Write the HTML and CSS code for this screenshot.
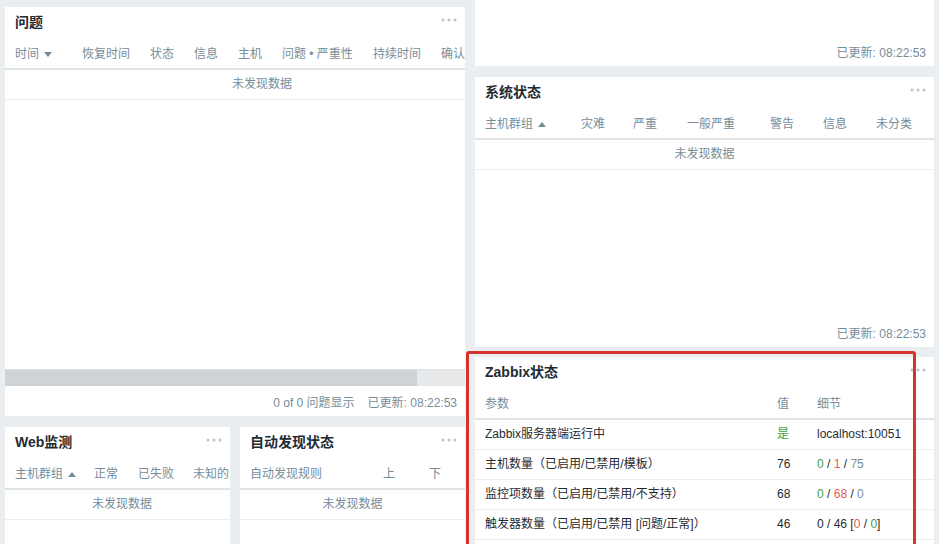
FILE: index.html
```html
<!DOCTYPE html>
<html lang="zh-CN">
<head>
<meta charset="utf-8">
<title>Zabbix 仪表板</title>
<link rel="stylesheet" href="styles.css">
</head>
<body>
<div class="dash">
  <div class="col col-left">
    <section class="widget w-problems">
      <div class="w-head"><h4>问题</h4><span class="dots"><svg width="16" height="4" viewBox="0 0 16 4"><circle cx="2" cy="2" r="1.5"/><circle cx="8" cy="2" r="1.5"/><circle cx="14" cy="2" r="1.5"/></svg></span></div>
      <div class="w-body">
        <div class="scrollarea">
          <div class="tr th t-prob">
            <span>时间<i class="arr down"></i></span><span>恢复时间</span><span>状态</span><span>信息</span><span>主机</span><span>问题 • 严重性</span><span>持续时间</span><span>确认</span>
          </div>
          <div class="tr empty t-prob-w"><span>未发现数据</span></div>
        </div>
        <div class="hscroll"><div class="thumb"></div></div>
      </div>
      <div class="w-foot"><span class="count">0 of 0 问题显示</span><span>已更新: 08:22:53</span></div>
    </section>
    <div class="row2">
      <section class="widget w-small">
        <div class="w-head"><h4>Web监测</h4><span class="dots"><svg width="16" height="4" viewBox="0 0 16 4"><circle cx="2" cy="2" r="1.5"/><circle cx="8" cy="2" r="1.5"/><circle cx="14" cy="2" r="1.5"/></svg></span></div>
        <div class="tr th t-web">
          <span>主机群组<i class="arr up"></i></span><span>正常</span><span>已失败</span><span>未知的</span>
        </div>
        <div class="tr empty t-web-w"><span>未发现数据</span></div>
      </section>
      <section class="widget w-small">
        <div class="w-head"><h4>自动发现状态</h4><span class="dots"><svg width="16" height="4" viewBox="0 0 16 4"><circle cx="2" cy="2" r="1.5"/><circle cx="8" cy="2" r="1.5"/><circle cx="14" cy="2" r="1.5"/></svg></span></div>
        <div class="tr th t-disc">
          <span>自动发现规则</span><span>上</span><span>下</span>
        </div>
        <div class="tr empty"><span>未发现数据</span></div>
      </section>
    </div>
  </div>

  <div class="col col-right">
    <section class="widget w-top">
      <div class="w-fill"></div>
      <div class="w-foot"><span>已更新: 08:22:53</span></div>
    </section>
    <section class="widget w-sys">
      <div class="w-head"><h4>系统状态</h4><span class="dots"><svg width="16" height="4" viewBox="0 0 16 4"><circle cx="2" cy="2" r="1.5"/><circle cx="8" cy="2" r="1.5"/><circle cx="14" cy="2" r="1.5"/></svg></span></div>
      <div class="tr th t-sys">
        <span>主机群组<i class="arr up"></i></span><span>灾难</span><span>严重</span><span>一般严重</span><span>警告</span><span>信息</span><span>未分类</span>
      </div>
      <div class="tr empty"><span>未发现数据</span></div>
      <div class="w-fill"></div>
      <div class="w-foot"><span>已更新: 08:22:53</span></div>
    </section>
    <section class="widget w-zbx">
      <div class="w-head"><h4>Zabbix状态</h4><span class="dots"><svg width="16" height="4" viewBox="0 0 16 4"><circle cx="2" cy="2" r="1.5"/><circle cx="8" cy="2" r="1.5"/><circle cx="14" cy="2" r="1.5"/></svg></span></div>
      <div class="tr th t-zbx">
        <span>参数</span><span>值</span><span>细节</span>
      </div>
      <div class="tr td t-zbx">
        <span>Zabbix服务器端运行中</span><span class="green">是</span><span>localhost:10051</span>
      </div>
      <div class="tr td t-zbx">
        <span>主机数量（已启用/已禁用/模板）</span><span>76</span><span><b class="green">0</b> / <b class="red">1</b> / <b class="grey">75</b></span>
      </div>
      <div class="tr td t-zbx">
        <span>监控项数量（已启用/已禁用/不支持）</span><span>68</span><span><b class="green">0</b> / <b class="red">68</b> / <b class="grey">0</b></span>
      </div>
      <div class="tr td t-zbx">
        <span>触发器数量（已启用/已禁用 [问题/正常]）</span><span>46</span><span>0 / 46 [<b class="red">0</b> / <b class="green">0</b>]</span>
      </div>
    </section>
  </div>

  <div class="annot"></div>
</div>
</body>
</html>
```

FILE: styles.css
```css
* { box-sizing: border-box; }

html, body {
  margin: 0;
  padding: 0;
  height: 544px;
  overflow: hidden;
  background: #ebeef0;
}

body {
  font-family: "Liberation Sans", Arial, "Noto Sans CJK SC", sans-serif;
  font-size: 12px;
  color: #1f2c33;
}

.dash {
  position: relative;
  display: flex;
  gap: 10px;
  padding-left: 5px;
  height: 544px;
  overflow: hidden;
}

.col {
  display: flex;
  flex-direction: column;
  flex: none;
}

.col-left {
  width: 460px;
  padding-top: 7px;
  gap: 11px;
}

.col-right {
  width: 459px;
  gap: 0;
}

.widget {
  background: #ffffff;
  display: flex;
  flex-direction: column;
  flex: none;
  overflow: hidden;
}

.w-head {
  height: 31px;
  flex: none;
  display: flex;
  align-items: center;
  justify-content: space-between;
  padding: 0 8px 1px 10px;
}

.w-head h4 {
  margin: 0;
  font-size: 14px;
  line-height: 16px;
  font-weight: bold;
  color: #1f2c33;
  white-space: nowrap;
}

.dots {
  display: flex;
  margin-bottom: 5px;
}

.dots svg { fill: #bcc5ca; }

.tr {
  display: grid;
  flex: none;
  padding: 0 10px;
  white-space: nowrap;
}

.th {
  height: 32px;
  line-height: 30px;
  padding-top: 1px;
  border-bottom: 2px solid #dfe4e7;
  color: #768d99;
}

.td {
  height: 30px;
  line-height: 29px;
  border-bottom: 1px solid #ebeef0;
  color: #1f2c33;
}

.empty {
  display: block;
  height: 30px;
  line-height: 29px;
  border-bottom: 1px solid #ebeef0;
  text-align: center;
  color: #768d99;
}

.arr {
  display: inline-block;
  width: 0;
  height: 0;
  margin-left: 5px;
  vertical-align: 1px;
  border-left: 4px solid transparent;
  border-right: 4px solid transparent;
}

.arr.down { border-top: 5px solid #768d99; }
.arr.up { border-bottom: 5px solid #768d99; }

/* column templates */
.t-prob {
  width: 514px;
  grid-template-columns: 67px 68px 44px 44px 44px 91px 68px 60px;
}
.t-prob-w { width: 514px; }

.t-web {
  width: 234px;
  grid-template-columns: 79px 44px 55px 60px;
}
.t-web-w { width: 234px; }

.t-disc { grid-template-columns: 133px 46px 40px; }

.t-sys { grid-template-columns: 96px 52px 54px 83px 53px 53px 50px; }

.t-zbx { grid-template-columns: 292px 40px 1fr; }

/* problems widget */
.w-problems { height: 409px; }

.w-body {
  flex: 1;
  display: flex;
  flex-direction: column;
  overflow: hidden;
}

.scrollarea {
  flex: 1;
  overflow: hidden;
}

.hscroll {
  flex: none;
  height: 17px;
  background: #e6e8ea;
  border-top: 1px solid #dde1e4;
}

.thumb {
  width: 412px;
  height: 100%;
  background: #cdd3d7;
}

.w-foot {
  flex: none;
  height: 30px;
  display: flex;
  justify-content: flex-end;
  align-items: center;
  gap: 13px;
  padding-right: 8px;
  color: #768d99;
  white-space: nowrap;
}

.w-fill { flex: 1; }

.row2 {
  display: flex;
  flex: none;
  gap: 10px;
}

.w-small {
  width: 225px;
  height: 200px;
}

/* right column */
.w-top {
  height: 66px;
  margin-bottom: 11px;
}

.w-sys {
  height: 270px;
  margin-bottom: 10px;
}

.w-zbx {
  height: 220px;
}

.green { color: #429e47; font-weight: normal; }
.red { color: #e45959; font-weight: normal; }
.grey { color: #768d99; font-weight: normal; }

/* red annotation frame drawn over the Zabbix status widget */
.annot {
  position: absolute;
  left: 466px;
  top: 351px;
  width: 450px;
  height: 230px;
  border: 3px solid #d3342e;
  border-radius: 3px;
  pointer-events: none;
}
```
